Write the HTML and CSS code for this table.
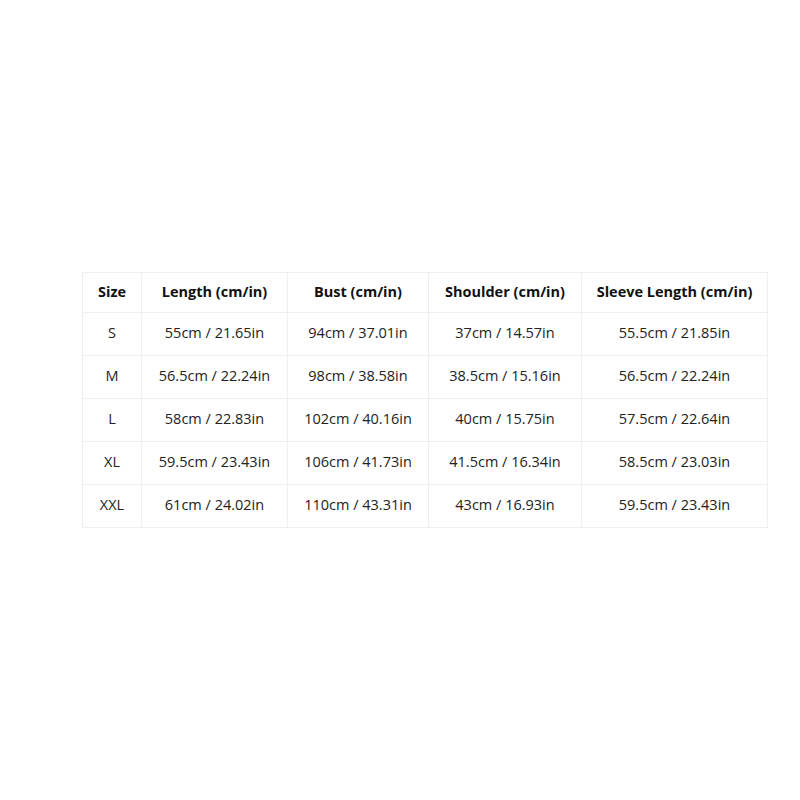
FILE: index.html
```html
<!DOCTYPE html>
<html>
<head>
<meta charset="utf-8">
<link rel="stylesheet" href="styles.css">
</head>
<body>
<table class="size-table">
  <colgroup>
    <col class="c1"><col class="c2"><col class="c3"><col class="c4"><col class="c5">
  </colgroup>
  <thead>
    <tr><th>Size</th><th>Length (cm/in)</th><th>Bust (cm/in)</th><th>Shoulder (cm/in)</th><th>Sleeve Length (cm/in)</th></tr>
  </thead>
  <tbody>
    <tr><td>S</td><td>55cm / 21.65in</td><td>94cm / 37.01in</td><td>37cm / 14.57in</td><td>55.5cm / 21.85in</td></tr>
    <tr><td>M</td><td>56.5cm / 22.24in</td><td>98cm / 38.58in</td><td>38.5cm / 15.16in</td><td>56.5cm / 22.24in</td></tr>
    <tr><td>L</td><td>58cm / 22.83in</td><td>102cm / 40.16in</td><td>40cm / 15.75in</td><td>57.5cm / 22.64in</td></tr>
    <tr><td>XL</td><td>59.5cm / 23.43in</td><td>106cm / 41.73in</td><td>41.5cm / 16.34in</td><td>58.5cm / 23.03in</td></tr>
    <tr><td>XXL</td><td>61cm / 24.02in</td><td>110cm / 43.31in</td><td>43cm / 16.93in</td><td>59.5cm / 23.43in</td></tr>
  </tbody>
</table>
</body>
</html>
```

FILE: styles.css
```css
html, body {
  margin: 0;
  padding: 0;
  background: #ffffff;
}
body {
  font-family: "Open Sans", "Noto Sans", sans-serif;
  font-size: 14.5px;
  color: #222;
}
.size-table {
  margin: 272px 0 0 82px;
  width: 685px;
  border-collapse: collapse;
  table-layout: fixed;
}
.c1 { width: 59px; }
.c2 { width: 146px; }
.c3 { width: 141px; }
.c4 { width: 153px; }
.c5 { width: 186px; }
.size-table th,
.size-table td {
  border: 1px solid #efefef;
  text-align: center;
  padding: 0;
  white-space: nowrap;
}
.size-table th {
  height: 36px;
  padding-bottom: 3px;
  font-weight: 700;
  color: #111;
}
.size-table td {
  height: 39px;
  padding-bottom: 3px;
  font-weight: 400;
  color: #222;
}
```
